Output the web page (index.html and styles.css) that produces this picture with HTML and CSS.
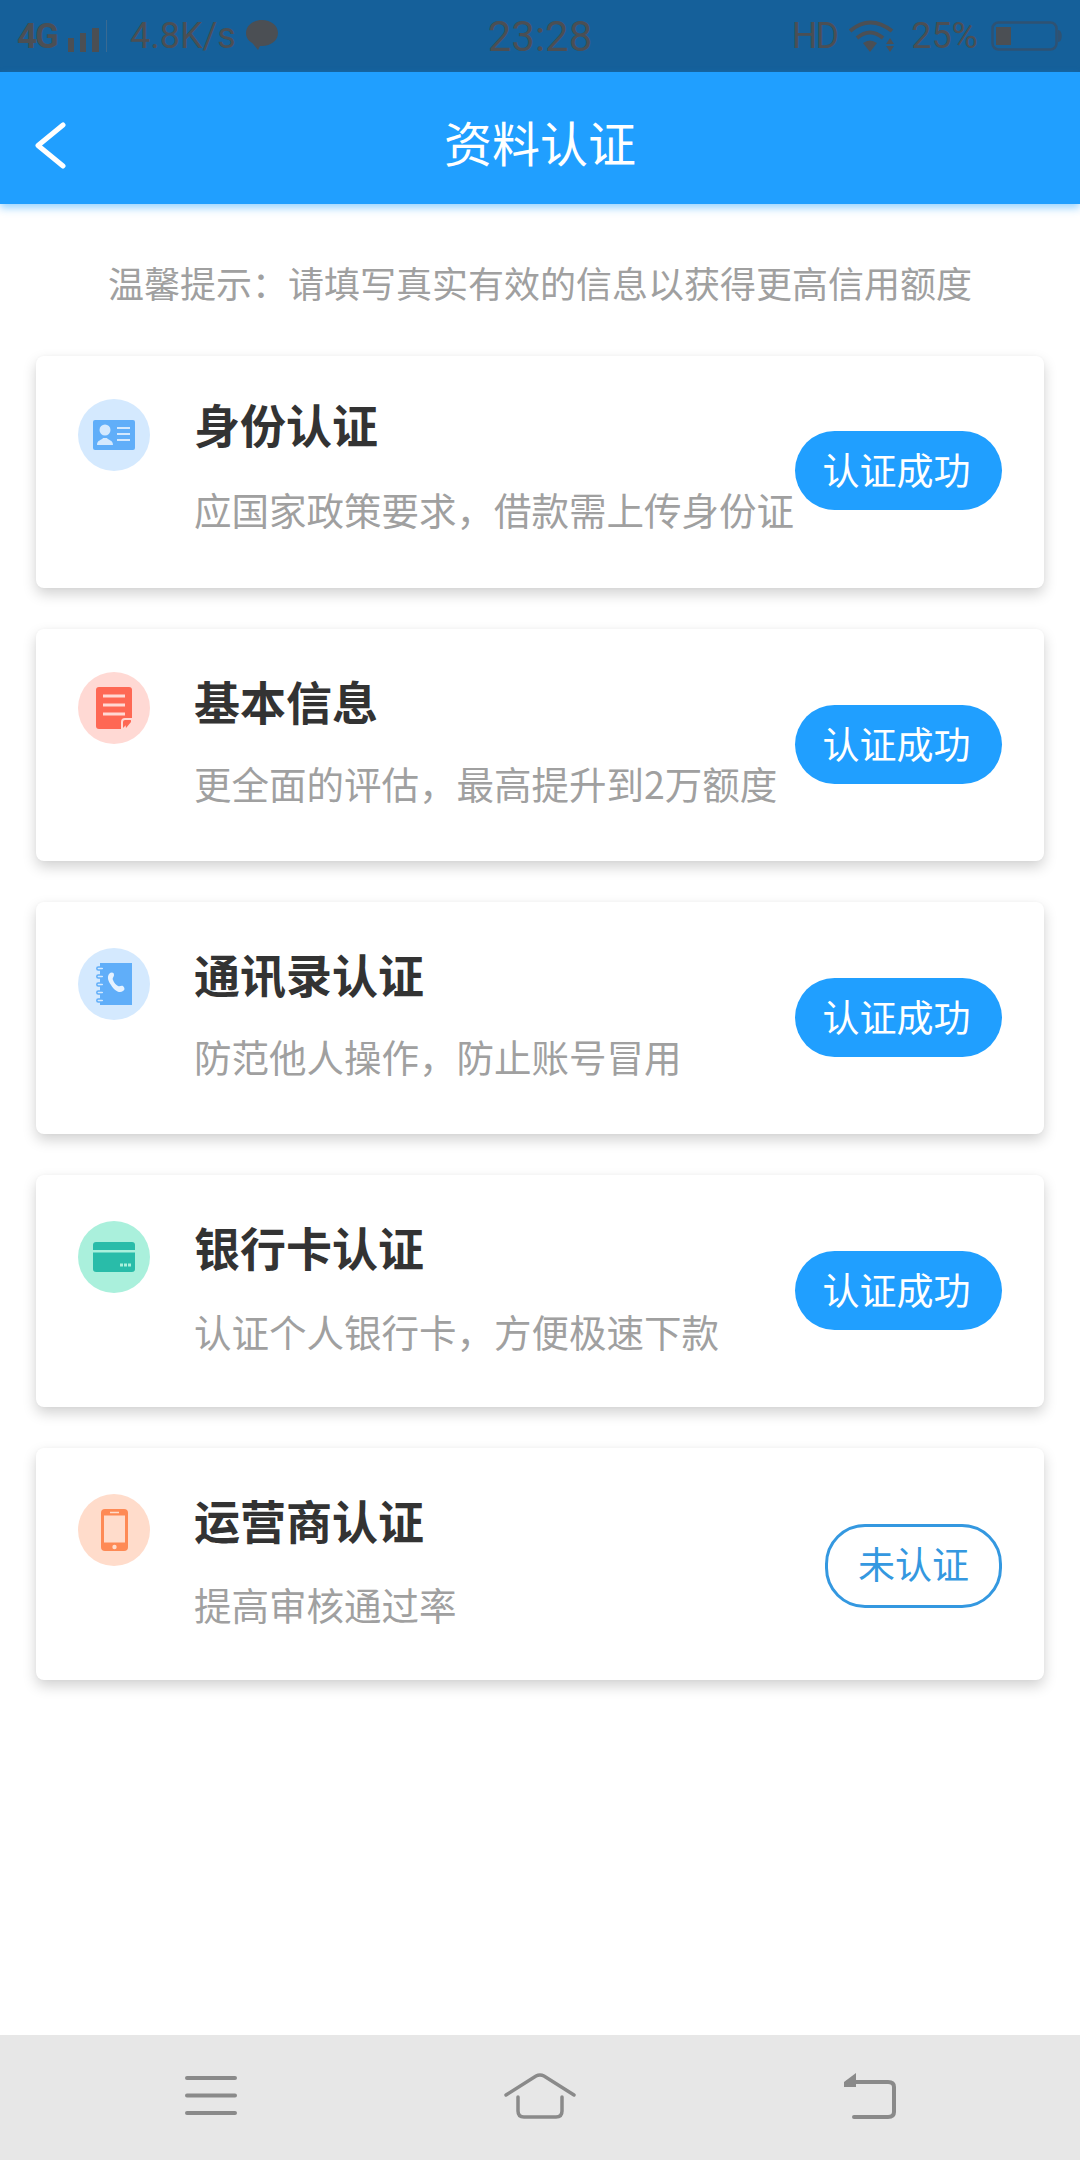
FILE: index.html
```html
<!DOCTYPE html>
<html lang="zh">
<head>
<meta charset="utf-8">
<title>资料认证</title>
<link rel="stylesheet" href="styles.css">
</head>
<body>
<div class="page">
  <header class="status">
    <div class="status-left">
      <span class="net">4G</span>
      <svg class="signal" width="40" height="32" viewBox="0 0 40 32"><rect x="1" y="18" width="6" height="14" fill="#4b4f54"/><rect x="13" y="13" width="6" height="19" fill="#4b4f54"/><rect x="25" y="8" width="7" height="24" fill="#4b4f54"/><rect x="39" y="0" width="1" height="32" fill="#3a6a92"/></svg>
      <span class="speed">4.8K/s</span>
      <svg class="bubble" width="32" height="30" viewBox="0 0 32 30"><path d="M16 0C7 0 0 5.500 0 13c0 4.500 2.500 8 6.500 10.200L12 30l2-4h2c9 0 16-5.500 16-13S25 0 16 0z" fill="#4b4f54"/></svg>
    </div>
    <div class="time">23:28</div>
    <div class="status-right">
      <span class="hd">HD</span>
      <svg class="wifi" width="46" height="32" viewBox="0 0 46 32"><g fill="none" stroke="#4b4f54" stroke-width="4"><path d="M1 11Q21-6 43 11"/><path d="M8 18Q21 7 34 18"/></g><path d="M14 23Q21 18 28 23L21 32z" fill="#4b4f54"/><path d="M41 18l4 6h-8zM37 26h8l-4 6z" fill="#4b4f54"/></svg>
      <span class="pct">25%</span>
      <svg class="battery" width="71" height="30" viewBox="0 0 71 30"><rect x="1.500" y="1.500" width="64" height="27" rx="6" fill="none" stroke="#2f5273" stroke-width="2.500"/><rect x="5" y="6" width="15" height="18" fill="#4b4f54"/><path d="M67 9c5 0 5 12 0 12z" fill="#2f5273"/></svg>
    </div>
  </header>

  <div class="appbar">
    <svg class="back" width="34" height="47" viewBox="0 0 34 47"><path d="M29 3L4 23.500 29 44" fill="none" stroke="#fff" stroke-width="5" stroke-linecap="round" stroke-linejoin="round"/></svg>
    <h1 class="appbar-title">资料认证</h1>
  </div>

  <p class="hint">温馨提示：请填写真实有效的信息以获得更高信用额度</p>

  <main class="list">
    <section class="card card-first">
      <div class="icon icon-blue">
        <svg width="42" height="30" viewBox="0 0 42 30"><rect width="42" height="30" rx="2" fill="#60aef9"/><circle cx="12" cy="10" r="5.500" fill="#d4e9fe"/><path d="M4 25c0-5 5-5 6-7h4c1 2 6 2 6 7z" fill="#d4e9fe"/><path d="M24 8h13M24 14h13M24 20h13" stroke="#d4e9fe" stroke-width="2"/></svg>
      </div>
      <div class="text">
        <h2 class="title">身份认证</h2>
        <p class="sub">应国家政策要求，借款需上传身份证</p>
      </div>
      <span class="btn">认证成功</span>
    </section>

    <section class="card">
      <div class="icon icon-red">
        <svg width="36" height="42" viewBox="0 0 36 42"><path d="M3 0h30a3 3 0 0 1 3 3v29L26 42H3a3 3 0 0 1-3-3V3a3 3 0 0 1 3-3z" fill="#fe6854"/><path d="M7 9h22M7 18h22M7 27h22" stroke="#ffd9d4" stroke-width="3"/><path d="M29 35l6-2v2l-5 6z" fill="#fe6854"/><path d="M26 42V35q0-3 3-3h7" fill="none" stroke="#ffd9d4" stroke-width="2"/></svg>
      </div>
      <div class="text">
        <h2 class="title">基本信息</h2>
        <p class="sub">更全面的评估，最高提升到2万额度</p>
      </div>
      <span class="btn">认证成功</span>
    </section>

    <section class="card card-low">
      <div class="icon icon-blue">
        <svg width="36" height="42" viewBox="0 0 36 42"><path d="M4 0h32v42H4z" fill="#60aef9"/><g fill="#d4e9fe" stroke="#60aef9" stroke-width="1.500"><rect x=".8" y="4" width="7" height="3" rx="1.500"/><rect x=".8" y="12" width="7" height="3" rx="1.500"/><rect x=".8" y="20" width="7" height="3" rx="1.500"/><rect x=".8" y="28" width="7" height="3" rx="1.500"/><rect x=".8" y="36" width="7" height="3" rx="1.500"/></g><path d="M13 11c2-2 5-2 5 1 0 2-2 3-1 5 1 3 3 5 5 6 2 1 3-1 5 0 2 2 2 4 0 5-4 3-9-1-12-6-3-4-4-8-2-11z" fill="#e6f2ff"/></svg>
      </div>
      <div class="text">
        <h2 class="title">通讯录认证</h2>
        <p class="sub">防范他人操作，防止账号冒用</p>
      </div>
      <span class="btn">认证成功</span>
    </section>

    <section class="card card-low card-wide">
      <div class="icon icon-green">
        <svg width="42" height="30" viewBox="0 0 42 30"><path d="M3 0h36a3 3 0 0 1 3 3v5H0V3a3 3 0 0 1 3-3z" fill="#29bca9"/><path d="M0 10.500h42V27a3 3 0 0 1-3 3H3a3 3 0 0 1-3-3z" fill="#29bca9"/><path d="M27 23h11" stroke="#aaf0dc" stroke-width="3" stroke-dasharray="3 1"/></svg>
      </div>
      <div class="text">
        <h2 class="title">银行卡认证</h2>
        <p class="sub">认证个人银行卡，方便极速下款</p>
      </div>
      <span class="btn">认证成功</span>
    </section>

    <section class="card card-low card-wide">
      <div class="icon icon-orange">
        <svg width="27" height="42" viewBox="0 0 27 42"><rect width="27" height="42" rx="4" fill="#fe8a55"/><rect x="3" y="6.500" width="21" height="27" fill="#ffdccb"/><path d="M9 3.500h9" stroke="#ffdccb" stroke-width="1.500"/><circle cx="13.500" cy="38" r="2.200" fill="#ffdccb"/></svg>
      </div>
      <div class="text">
        <h2 class="title">运营商认证</h2>
        <p class="sub">提高审核通过率</p>
      </div>
      <span class="btn btn-outline">未认证</span>
    </section>
  </main>

  <nav class="nav">
    <svg width="52" height="41" viewBox="0 0 52 41"><path d="M2 3h48M2 20.500h48M2 38h48" stroke="#8a8a8a" stroke-width="4" stroke-linecap="round"/></svg>
    <svg width="72" height="46" viewBox="0 0 72 46"><path d="M2 22L32 3q4-2 8 0l30 19" fill="none" stroke="#8a8a8a" stroke-width="3.500" stroke-linecap="round"/><path d="M14 24v14q0 6 6 6h32q6 0 6-6V24" fill="none" stroke="#8a8a8a" stroke-width="3.500" stroke-linecap="round"/></svg>
    <svg width="54" height="46" viewBox="0 0 54 46"><path d="M2 9l12-9v14H2z" fill="#8a8a8a"/><path d="M6 9h40q6 0 6 5v25q0 5-6 5H12" fill="none" stroke="#8a8a8a" stroke-width="4" stroke-linecap="round"/></svg>
  </nav>
</div>
</body>
</html>
```

FILE: styles.css
```css
* { box-sizing: border-box; }
html, body { margin: 0; padding: 0; background: #fff; }
body { font-family: "Noto Sans CJK SC", "Noto Sans", sans-serif; }
.page { width: 1080px; height: 2160px; display: flex; flex-direction: column; overflow: hidden; background: #fff; }

.status { height: 72px; flex: none; background: #15609a; display: grid; grid-template-columns: 1fr auto 1fr; align-items: center; padding: 0 17px 0 17px; color: #4b4f54; font-family: Roboto, "Liberation Sans", sans-serif; }
.status-left, .status-right { display: flex; align-items: center; }
.status-right { justify-content: flex-end; }
.net { font-size: 35px; font-weight: 700; letter-spacing: -2px; }
.signal { margin-left: 10px; }
.speed { font-size: 36px; margin-left: 23px; }
.bubble { margin-left: 10px; margin-top: -2px; }
.time { font-size: 42px; }
.hd { font-size: 36px; letter-spacing: -2px; }
.wifi { margin-left: 12px; }
.pct { font-size: 36px; margin-left: 16px; }
.battery { margin-left: 13px; margin-right: 1px; }

.appbar { position: relative; z-index: 1; height: 132px; flex: none; background: #209fff; display: flex; align-items: center; justify-content: center; padding-top: 6px; box-shadow: 0 4px 8px rgba(32, 159, 255, .45); }
.back { position: absolute; left: 34px; top: 50px; }
.appbar-title { margin: 0; font-size: 48px; font-weight: 400; color: #fff; line-height: 1; }

.hint { margin: 0; height: 152px; padding-top: 52px; flex: none; text-align: center; font-size: 36px; line-height: 52px; color: #a0a0a0; }

.list { display: flex; flex-direction: column; gap: 41px; padding: 0 36px; }
.card { height: 232px; background: #fff; border-radius: 8px; box-shadow: 0 6px 14px rgba(0, 0, 0, .18), 0 0 3px rgba(0, 0, 0, .03); display: flex; align-items: center; padding: 0 42px; }
.icon { width: 72px; height: 72px; border-radius: 50%; flex: none; align-self: flex-start; margin-top: 43px; display: flex; align-items: center; justify-content: center; }
.icon-blue { background: #d4e9fe; }
.icon-red { background: #ffd9d4; }
.icon-green { background: #aaf0dc; }
.icon-orange { background: #ffdccb; }
.text { flex: 1; min-width: 0; margin-left: 44px; align-self: flex-start; padding-top: 38px; }
.title { margin: 0; font-size: 46px; line-height: 66px; font-weight: 700; color: #333; }
.sub { margin: 23px 0 0; font-size: 37.500px; line-height: 54px; color: #a0a0a0; white-space: nowrap; }
.btn { flex: none; width: 207px; height: 79px; margin-top: -2px; padding: 0 4px 3px 0; border-radius: 40px; background: #209fff; color: #fff; font-size: 37px; display: flex; align-items: center; justify-content: center; }
.btn-outline { width: 177px; height: 84px; margin-top: 4px; padding: 0 0 6px; border: 3px solid #3498e0; background: #fff; color: #3498e0; }

.card-first .text { padding-top: 34px; }
.card-first .sub { margin-top: 26px; }
.card-first .btn { margin-top: -4px; }
.card-low .icon { margin-top: 46px; }
.card-wide .sub { margin-top: 25px; }

.nav { margin-top: auto; height: 125px; flex: none; background: #e7e7e7; display: grid; grid-template-columns: repeat(3, 1fr); justify-items: center; align-items: center; padding: 0 47px 4px; }
```
